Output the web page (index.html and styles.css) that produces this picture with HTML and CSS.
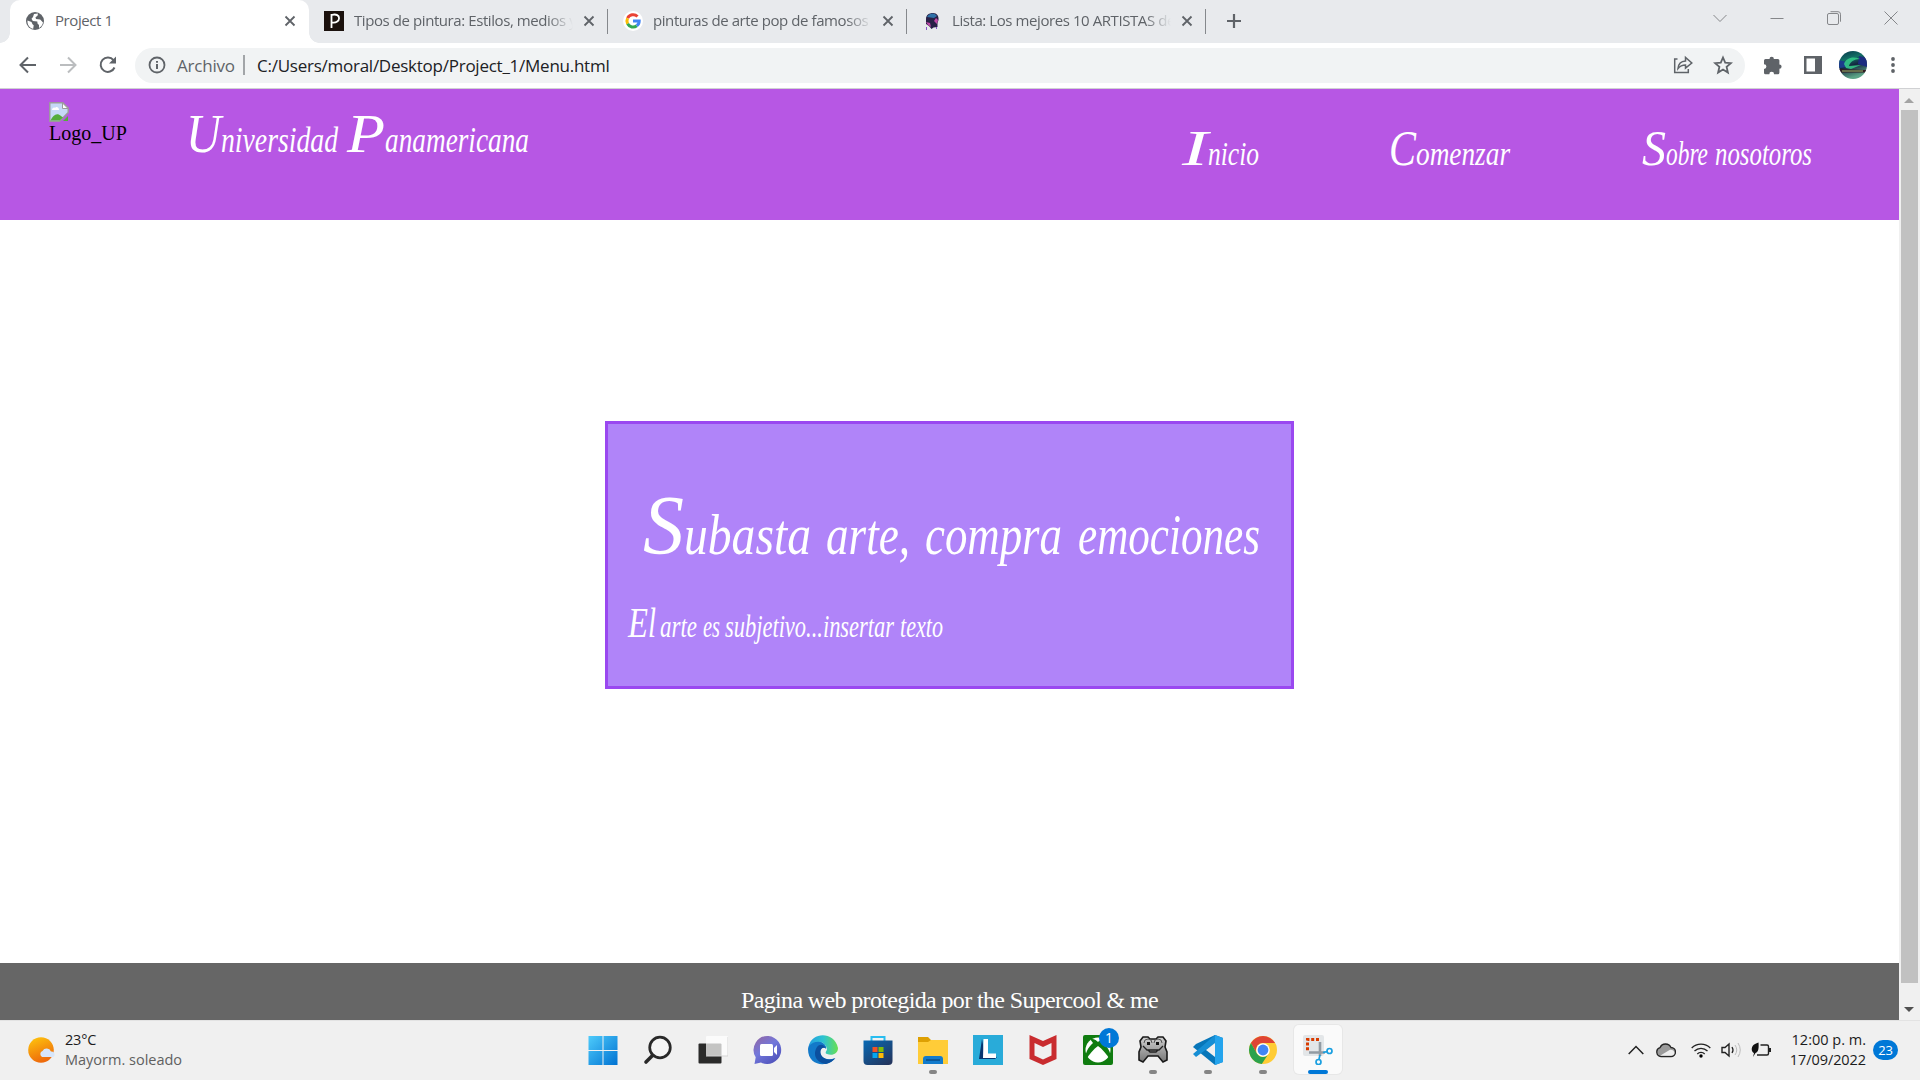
FILE: index.html
```html
<!DOCTYPE html>
<html lang="es">
<head>
<meta charset="utf-8">
<title>Project 1</title>
<link rel="stylesheet" href="styles.css">
</head>
<body>
<div class="screen">
  <div class="tabstrip">
    <div class="tab tab-active">
      <svg class="favicon" viewBox="0 0 20 20"><circle cx="10" cy="10" r="9" fill="#5f6368"/><path d="M2.500 9.500l4 1.500 1 2.200 1.200 1-.5 3.600C4.500 17 2 13.500 2.500 9.500zM9 3l4-.5-.5 2.300-2 1.500.5 1.800 4.200.3 2.800 3c-.4 2.500-2 4.500-4 5.500v-3l-1.500-1.300-.2-2.200-4.500-.4-1.300-2.200L8 6z" fill="#fff"/></svg>
      <span class="tab-title">Project 1</span>
      <svg class="tab-close" viewBox="0 0 12 12"><path d="M1.500 1.500l9 9M10.500 1.500l-9 9"/></svg>
    </div>
    <div class="tab">
      <svg class="favicon" viewBox="0 0 20 20"><rect width="20" height="20" fill="#1b110d"/><path d="M7.500 3v14M7.500 4C18 1 17 13 8 11.500" fill="none" stroke="#fff" stroke-width="1.800"/></svg>
      <span class="tab-title fade">Tipos de pintura: Estilos, medios y</span>
      <svg class="tab-close" viewBox="0 0 12 12"><path d="M1.500 1.500l9 9M10.500 1.500l-9 9"/></svg>
    </div>
    <div class="tab">
      <svg class="favicon" viewBox="0 0 20 20"><circle cx="10" cy="10" r="10" fill="#fff"/><g fill="none" stroke-width="3"><path d="M14.500 5.500A6.200 6.200 0 0 0 4.600 7.200" stroke="#ea4335"/><path d="M4.600 7.200a6.200 6.200 0 0 0 0 5.600" stroke="#fbbc05"/><path d="M4.600 12.800a6.200 6.200 0 0 0 9.200 2" stroke="#34a853"/><path d="M13.800 14.800A6 6 0 0 0 16.200 10H10" stroke="#4285f4"/></g></svg>
      <span class="tab-title fade">pinturas de arte pop de famosos</span>
      <svg class="tab-close" viewBox="0 0 12 12"><path d="M1.500 1.500l9 9M10.500 1.500l-9 9"/></svg>
    </div>
    <div class="tab">
      <svg class="favicon" viewBox="0 0 20 20"><path d="M4 8c0-4 3-6 7-6s6 3 5.500 7l-1 3v4l-4 .5-2 1.500-2.500-3-3-2z" fill="#292047"/><path d="M5 6c2-4 7-5 10-1l-3 2z" fill="#2e71a8"/><path d="M4 11l4 1 1 4-3-2zM14 7l2 2-1 4-3-3z" fill="#c04aa8"/><path d="M4.500 16v3M14.500 16v2" stroke="#8a55c9"/></svg>
      <span class="tab-title fade">Lista: Los mejores 10 ARTISTAS de</span>
      <svg class="tab-close" viewBox="0 0 12 12"><path d="M1.500 1.500l9 9M10.500 1.500l-9 9"/></svg>
    </div>
    <svg class="new-tab" viewBox="0 0 16 16"><path d="M8 1v14M1 8h14" stroke="#5f6368" stroke-width="2.200"/></svg>
    <div class="window-controls">
      <svg viewBox="0 0 14 14"><path d="M.5 4l6.500 6.500L13.500 4"/></svg>
      <svg viewBox="0 0 14 14"><path d="M.5 7.500h13"/></svg>
      <svg viewBox="0 0 14 14"><rect x=".5" y="2.500" width="11" height="11" rx="1.500"/><path d="M3.500.7h7.500a2.500 2.500 0 0 1 2.500 2.500v7.500"/></svg>
      <svg viewBox="0 0 14 14"><path d="M.5.5l13 13M13.500.5l-13 13"/></svg>
    </div>
  </div>

  <div class="toolbar">
    <div class="nav-buttons">
      <svg viewBox="0 0 20 20"><path d="M18 10H3M10 2.500L2.500 10l7.500 7.500"/></svg>
      <svg class="disabled" viewBox="0 0 20 20"><path d="M2 10h15M10 2.500l7.500 7.500-7.500 7.500"/></svg>
      <svg viewBox="0 0 20 20"><path d="M16.500 12.500A7.200 7.200 0 1 1 15.500 5.200"/><path d="M18 1.500v7h-7z" fill="#5f6368" stroke="none"/></svg>
    </div>
    <div class="omnibox">
      <svg class="info" viewBox="0 0 18 18"><circle cx="9" cy="9" r="7.500" fill="none" stroke="#5f6368" stroke-width="1.800"/><path d="M9 8v5M9 5v1.800" stroke="#5f6368" stroke-width="2"/></svg>
      <span class="scheme">Archivo</span>
      <span class="divider"></span>
      <span class="url">C:/Users/moral/Desktop/Project_1/Menu.html</span>
      <span class="omni-actions">
        <svg viewBox="0 0 20 20"><path d="M4.500 4H1.700v13.500h13.600V14M5 13.500C5.500 8 8 6.200 12.500 6V2.500L18.800 8l-6.300 5.200V10C9 10 7 11 5 13.500z"/></svg>
        <svg viewBox="0 0 20 20"><path d="M10 2.500l2.200 5.200 5.700.5-4.300 3.700 1.300 5.600-4.900-3-4.900 3 1.300-5.600-4.300-3.700 5.700-.5z" stroke-width="1.800"/></svg>
      </span>
    </div>
    <svg class="ext" viewBox="0 0 20 20"><path d="M1 5.500a1.500 1.500 0 0 1 1.500-1.500h4a2.200 2.200 0 1 1 4.400 0h4a1.500 1.500 0 0 1 1.500 1.500v3.900a2.200 2.200 0 1 1 0 4.400v3.900a1.500 1.500 0 0 1-1.500 1.500h-3.800a2.400 2.400 0 0 0-4.800 0H2.500A1.500 1.500 0 0 1 1 17.700v-3.700a2.400 2.400 0 0 0 0-4.800z" fill="#5f6368"/></svg>
    <svg class="panel" viewBox="0 0 18 18"><path d="M0 0h18v18H0zM2.500 2.500v13h8.500v-13z" fill="#5f6368" fill-rule="evenodd"/></svg>
    <svg class="avatar" viewBox="0 0 28 28"><defs><clipPath id="av"><circle cx="14" cy="14" r="14"/></clipPath><linearGradient id="aurora" x2=".3" y2="1"><stop stop-color="#07344a"/><stop offset=".35" stop-color="#137065"/><stop offset=".6" stop-color="#13253f"/><stop offset="1" stop-color="#5da487"/></linearGradient></defs><g clip-path="url(#av)"><path d="M0 0h28v28H0z" fill="url(#aurora)"/><path d="M20 5l8 2v9l-9-3z" fill="#1c2c80"/><path d="M0 9l7 2 2 5-9 1z" fill="#1c3c8c"/><path d="M5 13c2-6 9-8 16-5-6 0-10 3-11 7l12-1-10 4-5-1z" fill="#35cf8a" opacity=".85"/><path d="M0 18l28 1v2.500H0z" fill="#341c23"/><path d="M3 20h21" stroke="#98bd75"/></g></svg>
    <svg class="menu-dots" viewBox="0 0 4 18"><circle cx="2" cy="3" r="1.900"/><circle cx="2" cy="9" r="1.900"/><circle cx="2" cy="15" r="1.900"/></svg>
  </div>

  <div class="viewport">
    <div class="page">
      <header class="site-header">
        <div class="logo">
          <svg viewBox="0 0 20 20"><path d="M.8.800h13L19.200 6v4.500L10.500 19.200H.8z" fill="#c6d9f7" stroke="#9b9b9b" stroke-width="1.400"/><path d="M13.500 1v5.500H19z" fill="#fff" stroke="#9b9b9b"/><path d="M3 8c0-2 2-3 3-2 1-2 4-1 4 2z" fill="#fff"/><path d="M1.500 18.500C4 13 8 10 12 14l2 1.500-3.500 3zM19 14v5h-5z" fill="#54ad3b"/></svg>
          <span>Logo_UP</span>
        </div>
        <svg class="script brand" width="346" height="60"><text y="43" font-size="35"><tspan x="1" font-size="55" textLength="35" lengthAdjust="spacingAndGlyphs">U</tspan><tspan x="36" textLength="117" lengthAdjust="spacingAndGlyphs">niversidad</tspan> <tspan x="162" font-size="55" textLength="38" lengthAdjust="spacingAndGlyphs">P</tspan><tspan x="200" textLength="144" lengthAdjust="spacingAndGlyphs">anamericana</tspan></text></svg>
        <nav class="site-nav">
          <svg class="script" width="78" height="60"><text y="43" font-size="34"><tspan x="1" font-size="50" textLength="26" lengthAdjust="spacingAndGlyphs">I</tspan><tspan x="27" textLength="51" lengthAdjust="spacingAndGlyphs">nicio</tspan></text></svg>
          <svg class="script" width="122" height="60"><text y="43" font-size="34"><tspan x="0" font-size="50" textLength="27" lengthAdjust="spacingAndGlyphs">C</tspan><tspan x="27" textLength="94" lengthAdjust="spacingAndGlyphs">omenzar</tspan></text></svg>
          <svg class="script" width="172" height="60"><text y="43" font-size="34"><tspan x="1" font-size="50" textLength="24" lengthAdjust="spacingAndGlyphs">S</tspan><tspan x="25" textLength="42" lengthAdjust="spacingAndGlyphs">obre</tspan> <tspan x="74" textLength="97" lengthAdjust="spacingAndGlyphs">nosotoros</tspan></text></svg>
        </nav>
      </header>
      <main>
        <section class="hero">
          <svg class="script hero-title" width="622" height="90"><text y="66" font-size="57"><tspan x="1" font-size="84" textLength="41" lengthAdjust="spacingAndGlyphs">S</tspan><tspan x="42" textLength="127" lengthAdjust="spacingAndGlyphs">ubasta</tspan> <tspan x="184" textLength="84" lengthAdjust="spacingAndGlyphs">arte,</tspan> <tspan x="283" textLength="137" lengthAdjust="spacingAndGlyphs">compra</tspan> <tspan x="436" textLength="182" lengthAdjust="spacingAndGlyphs">emociones</tspan></text></svg>
          <svg class="script hero-copy" width="320" height="50"><text y="34" font-size="31"><tspan x="0" font-size="42" textLength="20" lengthAdjust="spacingAndGlyphs">E</tspan><tspan x="20" font-size="42" textLength="8" lengthAdjust="spacingAndGlyphs">l</tspan> <tspan x="32" textLength="37" lengthAdjust="spacingAndGlyphs">arte</tspan> <tspan x="75" textLength="17" lengthAdjust="spacingAndGlyphs">es</tspan> <tspan x="97" textLength="169" lengthAdjust="spacingAndGlyphs">subjetivo...insertar</tspan> <tspan x="272" textLength="43" lengthAdjust="spacingAndGlyphs">texto</tspan></text></svg>
        </section>
      </main>
      <footer class="site-footer">Pagina web protegida por the Supercool &amp; me</footer>
    </div>
    <div class="scrollbar">
      <svg viewBox="0 0 10 5"><path d="M0 5l5-5 5 5z" fill="#a3a3a3"/></svg>
      <div class="thumb"></div>
      <svg viewBox="0 0 10 5"><path d="M0 0l5 5 5-5z" fill="#505050"/></svg>
    </div>
  </div>

  <div class="taskbar">
    <div class="weather">
      <svg viewBox="0 0 28 28"><defs><linearGradient id="sun" x2=".4" y2="1"><stop stop-color="#ffc90d"/><stop offset="1" stop-color="#ee6b0c"/></linearGradient></defs><circle cx="13" cy="14" r="12.800" fill="url(#sun)"/><path d="M14 21a3.300 3.300 0 0 1 .5-6 4.700 4.700 0 0 1 8.500.6 2.900 2.900 0 0 1 2 5.400z" fill="#d7e6fb"/></svg>
      <div><div class="temp">23°C</div><div class="cond">Mayorm. soleado</div></div>
    </div>
    <div class="apps">
      <div class="app"><svg viewBox="0 0 30 30"><defs><linearGradient id="win" x2="1" y2="1"><stop stop-color="#4ecbfb"/><stop offset="1" stop-color="#0072d2"/></linearGradient></defs><path d="M.5 1h14v14H.5zM15.500 1h14v14h-14zM.5 16h14v14H.5zM15.500 16h14v14h-14z" fill="url(#win)"/></svg></div>
      <div class="app"><svg viewBox="0 0 30 30"><circle cx="17" cy="12.500" r="10.300" fill="#f5f5f5" stroke="#292929" stroke-width="2.700"/><path d="M9.500 20.500L3 27" stroke="#292929" stroke-width="3.600" stroke-linecap="round"/></svg></div>
      <div class="app"><svg viewBox="0 0 30 30"><rect x=".5" y="8.500" width="23" height="20" rx="1" fill="#2b2b2a"/><rect x="8" y="1" width="22" height="20" rx="1" fill="#fff" opacity=".72"/><path d="M8 21h22V2" fill="none" stroke="#d5d5d5"/></svg></div>
      <div class="app"><svg viewBox="0 0 30 30"><defs><linearGradient id="chat" x2=".7" y2="1"><stop stop-color="#95659f"/><stop offset=".5" stop-color="#7378db"/><stop offset="1" stop-color="#5053bc"/></linearGradient></defs><path d="M15.500 1A14 14 0 1 1 8 27.500L1.500 29l1.200-6.700A14 14 0 0 1 15.500 1z" fill="url(#chat)"/><rect x="7" y="9" width="13" height="12" rx="1.500" fill="#fff"/><path d="M21 13l3-3v10l-3-3z" fill="#fff"/></svg></div>
      <div class="app"><svg viewBox="0 0 30 30"><defs><linearGradient id="edge"><stop stop-color="#249ee0"/><stop offset=".5" stop-color="#2dc3d1"/><stop offset="1" stop-color="#69df50"/></linearGradient></defs><path d="M0 14C1 5 10 4 15 8c2 1 4 4 3 6-3-3-6-1-6 3 0 6 8 9 15 6C22 32 0 33 0 14z" fill="#1379c9"/><path d="M9 12c-5 8 0 16 9 17 4-1 8-4 9.500-6-7 4-15 0-15-6 0-3 2-5 5-4-2-4-6-4-8.500-1z" fill="#0c509f"/><path d="M.8 11C4-3 26-4 30 13c0 6-6 8-11 6-3-1 0-3 0-5C18 6 7 4 .8 11z" fill="url(#edge)"/></svg></div>
      <div class="app"><svg viewBox="0 0 30 30"><defs><linearGradient id="store" x2=".8" y2="1"><stop stop-color="#086ab5"/><stop offset="1" stop-color="#23365f"/></linearGradient></defs><path d="M8.500 7V2h13v5" fill="none" stroke="#28bdf0" stroke-width="2"/><path d="M.5 5.500h29V26a4 4 0 0 1-4 4h-21a4 4 0 0 1-4-4z" fill="url(#store)"/><path d="M9.500 12H14.500v5h-5z" fill="#f35325"/><path d="M15.500 12h5v5h-5z" fill="#81bc06"/><path d="M9.500 18h5v5h-5z" fill="#05a6f0"/><path d="M15.500 18h5v5h-5z" fill="#ffba08"/></svg></div>
      <div class="app running"><svg viewBox="0 0 30 30"><path d="M0 2h10l3 3h17v5H0z" fill="#dea003"/><path d="M0 7h10l3-2h17v24H0z" fill="#ffcc38"/><path d="M5 29v-5q0-3 3-3h14q3 0 3 3v5z" fill="#137bcc"/><path d="M8 25h14" stroke="#0b4a83" stroke-width="1.400"/></svg></div>
      <div class="app"><svg viewBox="0 0 30 30"><path d="M0 0h30v30H0z" fill="#29abd9"/><path d="M9 4L6 24h16l2-2-12-2z" fill="#063570"/><path d="M10.500 4H15v14.500h8V23H10z" fill="#fff"/></svg></div>
      <div class="app"><svg viewBox="0 0 30 30"><path d="M1.500 0L15 6 28.500 0v24L15 30 1.500 24zM6.500 8v12.500l8.500 4 8.500-4V8L15 12z" fill="#c92c2f" fill-rule="evenodd"/></svg></div>
      <div class="app"><svg viewBox="0 0 30 30"><rect width="30" height="30" rx="2" fill="#107c10"/><circle cx="15" cy="15" r="12.500" fill="#fff"/><path d="M7 4c4-1 8 3 8 3s5-4 8-3l-3 4c6 5 9 12 7 17-3-6-8-11-12-14C11 14 6 19 3 25 1 20 5 12 10 8z" fill="#107c10"/></svg><span class="app-badge">1</span></div>
      <div class="app running"><svg viewBox="0 0 30 30"><defs><linearGradient id="pad" x2="0" y2="1"><stop stop-color="#d0d0d0"/><stop offset="1" stop-color="#777"/></linearGradient></defs><path d="M5 2h5l2 2h6l2-2h5l3 4-1 6 2 5v8l-4 2-5-6H10l-5 6-4-2v-8l2-5-1-6z" fill="url(#pad)" stroke="#191919" stroke-width="1.600"/><path d="M6 8q0-4 4-4t4 4M16 8q0-4 4-4t4 4" fill="none" stroke="#555"/><path d="M9 7h3v3H9zM18 7h3v3h-3z" fill="#111"/><path d="M5 11l4 4h12l4-4M10 15l2 2h6l2-2" fill="none" stroke="#222" stroke-width="1.300"/></svg></div>
      <div class="app running"><svg viewBox="0 0 30 30"><path d="M22 0l8 3v24l-8 3L0 12l3-3z" fill="#0776b9"/><path d="M22 8L3 22l-3-3L22 0z" fill="#168ed4"/><path d="M22 8v14l-9-7z" fill="#f0f0f0"/><path d="M22 0l8 3v24l-8 3z" fill="#24a4ed"/></svg></div>
      <div class="app running"><svg viewBox="0 0 30 30"><circle cx="15" cy="15" r="14" fill="#ffcc35"/><path d="M2.900 8A14 14 0 0 1 27.100 8H15a7 7 0 0 0-6.100 10.500z" fill="#df4434"/><path d="M2.900 8l6 10.500A7 7 0 0 0 19.500 20.300L13.800 29A14 14 0 0 1 2.900 8z" fill="#2ba24c"/><circle cx="15" cy="15" r="6.800" fill="#fff"/><circle cx="15" cy="15" r="5.400" fill="#4285f4"/></svg></div>
      <div class="app active"><svg viewBox="0 0 30 30"><rect width="21" height="21" rx="2" fill="#e3e6e8"/><path d="M16 4.500H4.500V17" fill="none" stroke="#d83b01" stroke-width="3" stroke-dasharray="3 1.800"/><path d="M17 7v14M6 17.500h16" stroke="#929ba2" stroke-width="2.600"/><g fill="none" stroke="#1a9fe0" stroke-width="1.700"><circle cx="26.500" cy="16" r="2.500"/><circle cx="15.500" cy="27" r="2.500"/></g><path d="M16 24l1-4M20 17.500l4-.8" stroke="#1a9fe0" stroke-width="1.700"/></svg></div>
    </div>
    <div class="tray">
      <svg width="16" height="10" viewBox="0 0 16 10"><path d="M.7 9L8 1.500 15.300 9" fill="none" stroke="#222" stroke-width="1.500"/></svg>
      <svg class="cloud" width="20" height="16" viewBox="0 0 20 16"><path d="M5 14.500A4.500 4.500 0 0 1 4 5.700 6 6 0 0 1 15 5.500a4.500 4.500 0 0 1 0 9z" fill="#9b9b9b" stroke="#252525" stroke-width="1.300"/><path d="M4 13.700l10-6c5-.5 6 5 1.500 6z" fill="#eee"/></svg>
      <svg class="wifi" width="20" height="16" viewBox="0 0 20 16"><g fill="none" stroke="#222" stroke-width="1.300"><path d="M.7 6a13 13 0 0 1 18.600 0M3.500 9a9.200 9.200 0 0 1 13 0M6.300 12a5.200 5.200 0 0 1 7.400 0"/></g><circle cx="10" cy="14" r="1.700"/></svg>
      <svg class="speaker" width="20" height="16" viewBox="0 0 20 16"><path d="M1 5.500h3L8 2v12l-4-3.500H1z" fill="none" stroke="#222" stroke-width="1.400"/><path d="M11 5q2 3 0 6" fill="none" stroke="#222" stroke-width="1.300"/><path d="M14 3q3.500 5 0 10M17 1q4.500 7 0 14" fill="none" stroke="#bbb"/></svg>
      <svg class="battery" width="20" height="16" viewBox="0 0 20 16"><path d="M9.500 3H16q1.500 0 1.500 1.500v7q0 1.500-1.500 1.500H6" fill="none" stroke="#222" stroke-width="1.400"/><path d="M19 6v4" stroke="#222" stroke-width="2"/><path d="M7.500.5C2 2 0 5 1 9q1 2 2 2l-1 4 2.500-4C7.500 10 8 6 7.500.5z" fill="#111"/></svg>
      <div class="clock"><div class="time">12:00 p. m.</div><div class="date">17/09/2022</div></div>
      <span class="notif">23</span>
    </div>
  </div>
</div>
</body>
</html>
```
FILE: styles.css
```css
* { box-sizing: border-box; }
body { margin: 0; font-family: "Open Sans", sans-serif; }
svg { display: block; flex: none; }
.screen { width: 1920px; height: 1080px; overflow: hidden; display: flex; flex-direction: column; background: #fff; }

.tabstrip { height: 43px; flex: none; background: #e8eaed; display: flex; align-items: flex-start; padding-left: 10px; }
.tab { position: relative; width: 299px; height: 43px; display: flex; align-items: center; padding: 0 12px 1px 15px; }
.tab-active { background: #fff; border-radius: 10px 10px 0 0; }
.tab-active::before, .tab-active::after { content: ""; position: absolute; bottom: 0; width: 10px; height: 10px; }
.tab-active::before { left: -10px; background: radial-gradient(circle at 0 0, transparent 9.500px, #fff 10px); }
.tab-active::after { right: -10px; background: radial-gradient(circle at 100% 0, transparent 9.500px, #fff 10px); }
.tab:not(.tab-active)::after { content: ""; position: absolute; right: 0; top: 9px; width: 1px; height: 25px; background: #85888c; }
.favicon { width: 20px; height: 20px; }
.tab-title { margin-left: 10px; width: 219px; white-space: nowrap; overflow: hidden; font-size: 15px; line-height: 20px; padding-bottom: 2px; letter-spacing: -.42px; color: #5f6368; }
.fade { -webkit-mask-image: linear-gradient(90deg, #000 88%, transparent); mask-image: linear-gradient(90deg, #000 88%, transparent); }
.tab-close { width: 12px; height: 12px; margin-left: 10px; }
.tab-close path { stroke: #5f6368; stroke-width: 1.800; }
.new-tab { width: 16px; height: 16px; margin: 13px 0 0 20px; }
.window-controls { margin: 11px 22px 0 auto; display: flex; gap: 43px; }
.window-controls svg { width: 14px; height: 14px; fill: none; stroke: #85878a; }

.toolbar { height: 46px; flex: none; display: flex; align-items: center; padding-bottom: 1px; border-bottom: 1px solid #d0d1d3; }
.nav-buttons { display: flex; gap: 20px; margin-left: 18px; }
.nav-buttons svg { width: 20px; height: 20px; fill: none; stroke: #5f6368; stroke-width: 2; }
.nav-buttons .disabled { stroke: #bbbdbf; }
.omnibox { width: 1610px; height: 35px; margin-left: 17px; border-radius: 18px; background: #f1f3f4; display: flex; align-items: center; font-size: 17px; }
.info { width: 18px; height: 18px; margin-left: 13px; }
.scheme { width: 59px; margin-left: 11px; color: #5f6368; letter-spacing: -.2px; }
.divider { width: 2px; height: 20px; background: #a2a5a8; margin: 0 12px 0 7px; }
.url { color: #202124; white-space: nowrap; letter-spacing: -.25px; }
.omni-actions { display: flex; gap: 20px; margin: 0 12px 0 auto; }
.omni-actions svg { width: 20px; height: 20px; fill: none; stroke: #5f6368; stroke-width: 1.500; }
.ext { width: 20px; height: 20px; margin-left: 18px; }
.panel { width: 18px; height: 18px; margin-left: 21px; }
.avatar { width: 28px; height: 28px; margin-left: 17px; }
.menu-dots { width: 4px; height: 18px; margin-left: 24px; fill: #5f6368; }

.viewport { height: 931px; flex: none; display: flex; }
.page { width: 1899px; display: flex; flex-direction: column; overflow: hidden; }
.site-header { height: 131px; flex: none; background: #b757e4; display: flex; align-items: flex-start; }
.logo { width: 80px; margin: 13px 0 0 49px; font: 20px/23px "Liberation Serif", serif; color: #000; }
.logo svg { width: 20px; height: 20px; }
.script { overflow: visible; fill: #fff; font-family: "Liberation Serif", serif; font-style: italic; }
.brand { margin: 20px 0 0 56px; }
.site-nav { display: flex; margin: 33px 86px 0 auto; gap: 130px; }
main { flex: 1; display: flex; justify-content: center; align-items: flex-start; padding-top: 201px; }
.hero { width: 689px; height: 268px; border: 3px solid #9a48f0; background: #b084f9; padding: 64px 0 0 20px; }
.hero-title { margin-left: 14px; }
.hero-copy { margin-top: 25px; }
.site-footer { height: 57px; flex: none; background: #666; color: #fff; font: 24px/27px "Liberation Serif", serif; letter-spacing: -.64px; text-align: center; padding-top: 24px; }
.scrollbar { width: 21px; background: #f0f0f0; display: flex; flex-direction: column; align-items: center; padding: 9px 1px 8px 0; }
.scrollbar svg { width: 10px; height: 5px; }
.thumb { width: 17px; height: 873px; margin: 7px 0 24px; background: #c1c1c1; flex: none; }

.taskbar { height: 60px; flex: none; background: #f0f0f0; border-top: 1px solid #e3e3e3; padding-bottom: 2px; display: flex; align-items: center; font-size: 14.500px; line-height: 20px; color: #1c1c1c; }
.weather { width: 550px; padding-left: 28px; display: flex; align-items: center; gap: 9px; }
.weather svg { width: 28px; height: 28px; }
.temp { letter-spacing: -.2px; }
.cond { color: #606060; letter-spacing: 0; }
.apps { display: flex; gap: 7px; margin-left: 29px; }
.app { position: relative; width: 48px; height: 49px; display: flex; align-items: center; justify-content: center; border-radius: 5px; }
.app > svg { width: 30px; height: 30px; }
.app.active { background: #fafafa; box-shadow: 0 0 0 1px #e7e7e7; }
.running::after, .active::after { content: ""; position: absolute; bottom: 0; width: 8px; height: 4px; border-radius: 2px; background: #858585; }
.active::after { width: 20px; background: #0078d7; }
.app-badge { position: absolute; left: 25px; top: 3px; width: 20px; height: 20px; border-radius: 50%; background: #0078d7; color: #fff; text-align: center; font-size: 14px; }
.tray { margin: 0 22px 0 auto; display: flex; align-items: center; }
.cloud { margin-left: 12px; }
.wifi { margin-left: 15px; }
.speaker { margin-left: 10px; }
.battery { margin-left: 10px; }
.clock { width: 86px; margin-left: 9px; text-align: right; white-space: nowrap; }
.time { letter-spacing: 0; }
.date { letter-spacing: -.08px; }
.notif { width: 25px; height: 20px; margin-left: 7px; border-radius: 10px; background: #0078d7; color: #fff; font-size: 13px; text-align: center; letter-spacing: -.3px; }
```
